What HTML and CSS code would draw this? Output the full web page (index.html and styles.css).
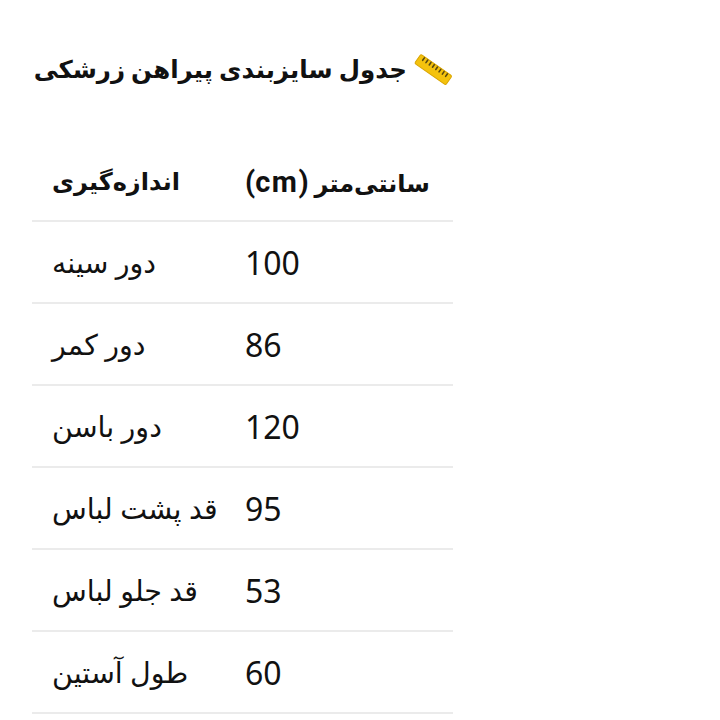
FILE: index.html
```
<!DOCTYPE html>
<html lang="fa">
<head>
<meta charset="utf-8">
<title>جدول سایزبندی</title>
<link rel="stylesheet" href="styles.css">
</head>
<body>
<main class="page">
  <h2 class="title" dir="rtl"><span class="ruler"><svg width="40" height="36" viewBox="0 0 40 36"><g transform="rotate(35 20 18)"><rect x="1" y="12" width="38" height="11" rx="1.5" fill="#f4c20d" stroke="#d9a400" stroke-width="1"/><g stroke="#5a4a10" stroke-width="1.6" stroke-linecap="round"><line x1="6" y1="13" x2="6" y2="16"/><line x1="10" y1="13" x2="10" y2="16"/><line x1="14" y1="13" x2="14" y2="16"/><line x1="18" y1="13" x2="18" y2="16"/><line x1="22" y1="13" x2="22" y2="16"/><line x1="26" y1="13" x2="26" y2="16"/><line x1="30" y1="13" x2="30" y2="16"/><line x1="34" y1="13" x2="34" y2="16"/></g></g></svg></span>جدول سایزبندی پیراهن زرشکی</h2>
  <table class="sizes">
    <thead>
      <tr><th class="c1">اندازه‌گیری</th><th class="c2">سانتی‌متر <span class="unit">(cm)</span></th></tr>
    </thead>
    <tbody>
      <tr><td class="c1">دور سینه</td><td class="num">100</td></tr>
      <tr><td class="c1">دور کمر</td><td class="num">86</td></tr>
      <tr><td class="c1">دور باسن</td><td class="num">120</td></tr>
      <tr><td class="c1">قد پشت لباس</td><td class="num">95</td></tr>
      <tr><td class="c1">قد جلو لباس</td><td class="num">53</td></tr>
      <tr><td class="c1">طول آستین</td><td class="num">60</td></tr>
    </tbody>
  </table>
</main>
</body>
</html>
```
FILE: styles.css
```
html, body { margin: 0; padding: 0; background: #ffffff; }
body { font-family: "Noto Sans", "DejaVu Sans", sans-serif; color: #111; }
.page { width: 421px; margin-left: 32px; padding-top: 48px; }
.title {
  margin: 0;
  font-family: Roboto, "DejaVu Sans", sans-serif;
  font-weight: 700;
  font-size: 24.5px;
  line-height: 44px;
  white-space: nowrap;
  display: flex;
  align-items: center;
  justify-content: flex-start;
  gap: 6px;
}
.ruler { display: inline-flex; }
.sizes {
  margin-top: 52px;
  width: 421px;
  table-layout: fixed;
  border-collapse: collapse;
}
.sizes th, .sizes td {
  direction: rtl;
  text-align: left;
  padding: 0 20px;
  border-bottom: 2px solid #ebebeb;
  white-space: nowrap;
}
.sizes th {
  height: 76px;
  font-family: Roboto, "DejaVu Sans", sans-serif;
  font-weight: 700;
  font-size: 24px;
}
.unit { font-size: 29px; letter-spacing: 1.5px; }
.sizes .c1 { width: 161px; padding-right: 12px; }
.sizes td.c1 { direction: ltr; }
.sizes .c2 { width: 188px; }
.sizes td {
  height: 80px;
  font-size: 28.5px;
  font-weight: 400;
}
.sizes td.num { font-size: 32px; }
```
